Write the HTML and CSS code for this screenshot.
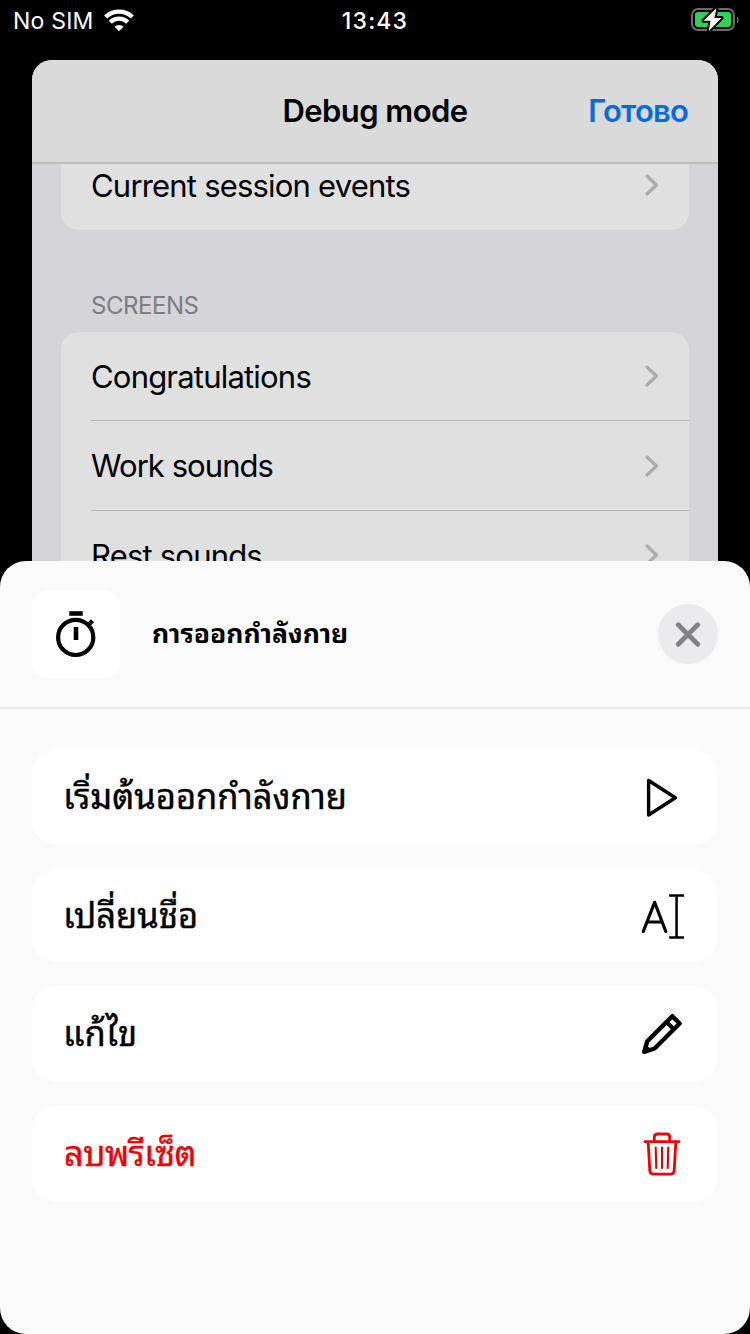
FILE: index.html
```
<!DOCTYPE html>
<html lang="th">
<head>
<meta charset="utf-8">
<title>Debug mode</title>
<link rel="stylesheet" href="styles.css">
</head>
<body>
<div class="screen">
  <header class="status">
    <div class="carrier">
      <span class="carrier-name">No SIM</span>
      <svg class="wifi" width="30" height="23" viewBox="0 0 30 23" fill="none" stroke="#fff">
        <path d="M1.6 8A19.4 19.4 0 0 1 28.4 8" stroke-width="4.4"/>
        <path d="M6.3 13.2A12.5 12.5 0 0 1 23.7 13.2" stroke-width="4.2"/>
        <path d="M10.5 17.7A6.6 6.6 0 0 1 19.5 17.7L15 22.3Z" fill="#fff" stroke="none"/>
      </svg>
    </div>
    <span class="clock">13:43</span>
    <svg class="battery" width="48" height="26" viewBox="0 0 48 26">
      <rect x="1" y="4" width="42" height="21" rx="6" fill="none" stroke="#6b6b6b" stroke-width="2"/>
      <rect x="4" y="7" width="36" height="15" rx="3" fill="#30d158"/>
      <path d="M46 11.5c2.2 1 2.2 6 0 7Z" fill="#6b6b6b"/>
      <path d="M25.5 3L12.5 15.8H19.5L17.8 26L30.5 12.9H23.4Z" fill="#fff" stroke="#000" stroke-width="4" stroke-linejoin="round" paint-order="stroke"/>
    </svg>
  </header>

  <section class="card">
    <div class="navbar">
      <h1 class="nav-title">Debug mode</h1>
      <span class="nav-done">Готово</span>
    </div>
    <div class="group group-top">
      <div class="row"><span>Current session events</span><svg class="chev" width="16" height="24" viewBox="0 0 16 24"><path d="M3 3L12.5 12L3 21"/></svg></div>
    </div>
    <h2 class="section-title">SCREENS</h2>
    <div class="group">
      <div class="row"><span>Congratulations</span><svg class="chev" width="16" height="24" viewBox="0 0 16 24"><path d="M3 3L12.5 12L3 21"/></svg></div>
      <div class="row"><span class="tight">Work sounds</span><svg class="chev" width="16" height="24" viewBox="0 0 16 24"><path d="M3 3L12.5 12L3 21"/></svg></div>
      <div class="row"><span>Rest sounds</span><svg class="chev" width="16" height="24" viewBox="0 0 16 24"><path d="M3 3L12.5 12L3 21"/></svg></div>
    </div>
  </section>

  <main class="sheet">
    <div class="sheet-head">
      <div class="tile">
        <svg width="48" height="48" viewBox="0 0 48 48" fill="none" stroke="#000">
          <circle cx="23.7" cy="27.4" r="17.6" stroke-width="4.2"/>
          <path d="M17.3 3.5H30.7" stroke-width="4.6"/>
          <path d="M24 17V30" stroke-width="4.6"/>
          <path d="M35.5 15.8L40.5 10.8" stroke-width="4.4"/>
        </svg>
      </div>
      <h2 class="sheet-title">การออกกำลังกาย</h2>
      <div class="close">
        <svg width="28" height="28" viewBox="0 0 28 28"><path d="M4.2 4.7L23.8 24.3M23.8 4.7L4.2 24.3" stroke="#838387" stroke-width="4.8" stroke-linecap="round"/></svg>
      </div>
    </div>
    <div class="actions">
      <div class="action">
        <span class="label">เริ่มต้นออกกำลังกาย</span>
        <svg width="48" height="48" viewBox="0 0 48 48" fill="none" stroke="#000"><path d="M10.6 7.5V42L37.4 24.8Z" stroke-width="3.4" stroke-linejoin="round"/></svg>
      </div>
      <div class="action action-short">
        <span class="label">เปลี่ยนชื่อ</span>
        <svg width="48" height="48" viewBox="0 0 48 48" fill="none" stroke="#000"><path d="M5.3 39.5L16.6 10.3L27.8 39.5M9.3 30H24.3" stroke-width="3.2" stroke-linecap="round" stroke-linejoin="round"/><path d="M31.2 3.5H46M31.2 45.5H46M38.6 3.5V45.5" stroke-width="2.5"/></svg>
      </div>
      <div class="action">
        <span class="label">แก้ไข</span>
        <svg width="48" height="48" viewBox="0 0 48 48" fill="none" stroke="#000" stroke-linejoin="round"><path d="M6.2 41.8L9.3 31.2L34.3 6.2L41.6 13.5L16.6 38.5Z" stroke-width="4.4"/><path d="M28.5 12L36 19.5" stroke-width="4"/><path d="M8 35L13 40L6 42Z" fill="#000" stroke-width="1"/></svg>
      </div>
      <div class="action action-danger">
        <span class="label">ลบพรีเซ็ต</span>
        <svg width="48" height="48" viewBox="0 0 48 48" fill="none" stroke="#f00000" stroke-linecap="round" stroke-linejoin="round"><path d="M7 11.6H41M16.3 11V7.2Q16.3 4 19.5 4H28.5Q31.7 4 31.7 7.2V11M10.2 12L11.8 40.5Q12 44.2 15.6 44.2H32.4Q36 44.2 36.2 40.5L37.8 12" stroke-width="2.8"/><path d="M17.7 17.5L18.3 38M24 17.5V38M30.3 17.5L29.7 38" stroke="#d00808" stroke-width="2.1"/></svg>
      </div>
    </div>
  </main>
</div>
</body>
</html>
```
FILE: styles.css
```
* { box-sizing: border-box; margin: 0; padding: 0; }
body { background: #000; font-family: Inter, sans-serif; color: #000; }
svg { flex: none; display: block; }
.screen { width: 750px; height: 1334px; display: flex; flex-direction: column; overflow: hidden; background: #000; }

.status { height: 60px; padding: 0 11px 0 13px; display: grid; grid-template-columns: 1fr auto 1fr; align-items: start; color: #fff; line-height: 42px; }
.carrier { display: flex; gap: 10px; }
.carrier-name { font-size: 23px; letter-spacing: 0.2px; }
.wifi { margin-top: 9px; }
.clock { font-size: 23px; font-weight: 500; letter-spacing: 1.2px; margin-right: 2px; }
.battery { justify-self: end; margin-top: 5px; }

.card { flex: none; width: 686px; height: 501px; margin: 0 auto; background: #d5d4d9; border-radius: 20px 20px 0 0; overflow: hidden; }
.navbar { height: 104px; padding: 0 30px; display: grid; grid-template-columns: 1fr auto 1fr; align-items: center; background: #dadada; border-bottom: 2px solid #bdbdc0; }
.nav-title { grid-column: 2; font-size: 31px; line-height: 38px; font-weight: 600; letter-spacing: -0.55px; }
.nav-done { justify-self: end; font-size: 31px; line-height: 38px; font-weight: 600; letter-spacing: -0.8px; color: #086bdc; }
.group { margin: 0 29px; background: #e0e0e0; border-radius: 18px; }
.group-top { height: 66px; border-radius: 0 0 18px 18px; }
.group-top .row { height: 42px; }
.row { height: 90px; margin-left: 30px; padding-right: 29px; display: flex; align-items: center; justify-content: space-between; font-size: 31px; letter-spacing: -0.8px; border-bottom: 1px solid #b9b9bb; }
.row:last-child { border-bottom: 0; }
.row:nth-child(3) { height: 88px; }
.group:last-child .row:first-child { height: 89px; }
.tight { letter-spacing: -0.95px; }
.chev { fill: none; stroke: #acacae; stroke-width: 3.2; stroke-linecap: round; stroke-linejoin: round; }
.section-title { height: 102px; padding: 61px 59px 0; font-size: 24px; line-height: 30px; font-weight: 400; letter-spacing: -0.45px; color: #7d7d82; }

.sheet { flex: 1; background: #fafafa; border-radius: 26px; }
.sheet-head { height: 148px; padding: 0 32px; display: flex; align-items: center; border-bottom: 2px solid #eaeaeb; }
.tile { width: 88px; height: 88px; display: grid; place-items: center; border-radius: 16px; background: #fff; }
.sheet-title, .action { font-family: "Noto Sans Thai Looped", "Noto Looped Thai", Thonburi, Loma, Garuda, Waree, Umpush, "Noto Serif Thai", FreeSerif, "Noto Sans Thai", sans-serif; }
.sheet-title { margin-left: 32px; padding-bottom: 6px; font-size: 26.5px; font-weight: 700; }
.close { width: 60px; height: 60px; margin-left: auto; display: grid; place-items: center; border-radius: 50%; background: #ebebed; }
.actions { padding: 40px 32px 0; display: flex; flex-direction: column; gap: 24px; }
.action { height: 96px; padding: 0 32px; display: flex; align-items: center; justify-content: space-between; border-radius: 25px; background: #fff; font-size: 34.5px; }
.label { margin-left: -1px; padding-bottom: 7px; -webkit-text-stroke: 0.4px currentColor; }
.action-short { height: 93px; }
.action-danger { color: #f00000; }
.action-danger .label { margin-left: 0; letter-spacing: -0.6px; }
```
